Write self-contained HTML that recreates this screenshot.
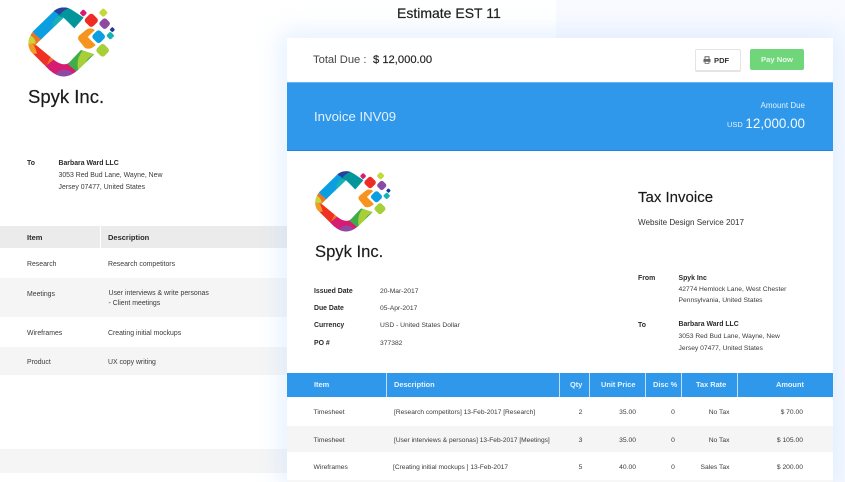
<!DOCTYPE html>
<html><head><meta charset="utf-8"><style>
html,body{margin:0;padding:0;width:845px;height:482px;overflow:hidden;background:#f8faff}
#p{position:relative;width:845px;height:482px;overflow:hidden;background:#f8faff;font-family:"Liberation Sans",sans-serif;color:#222;filter:blur(.25px)}
.a{position:absolute}
.t{position:absolute;white-space:nowrap;line-height:12px;height:12px;font-size:6.9px;color:#3a3a3a;margin-top:1.5px}
.s{font-size:6.72px}
.b{font-weight:bold;color:#2a2a2a}
.r{text-align:right;transform:translateX(-100%)}
.c{text-align:center;transform:translateX(-50%)}
.w{color:#fff}
.h{color:#e6f3fd;font-size:7.4px;font-weight:bold;margin-top:.5px}
.v{top:373px;width:1px;height:24px;background:#bfe0f8}
</style></head><body><div id="p">
<svg width="0" height="0" style="position:absolute"><defs>
<clipPath id="ring"><path d="M97 92L163 28Q190 10 217 28L250 50L222 82L190 50L106 131L165 180Q190 196 205 186L242 147L282 160L232 208Q190 245 148 208L92 152Q74 125 97 92Z"/></clipPath>
<symbol id="logo" viewBox="80 15 270 217">
<g clip-path="url(#ring)">
<path fill="#ee7326" d="M70 80L135 115L175 180L140 225L70 170Z"/>
<path fill="#ee3124" d="M92 135L108 134L150 168L138 196L85 160Z"/>
<path fill="#f59a23" d="M80 122Q102 122 110 158L80 160Z"/>
<path fill="#c5d83a" d="M80 98Q106 108 106 128L80 128Z"/>
<path fill="#0b9fe2" d="M88 86L165 12L205 45L125 118Z"/>
<path fill="#16b1b4" d="M155 75Q160 45 195 38L198 52L172 76Z"/>
<path fill="#00969b" d="M172 44Q178 20 210 10L265 50L222 90L190 50Z"/>
<path fill="#2a3f9e" d="M160 30L185 8L212 20Q190 24 178 42Z"/>
<path fill="#d81b72" d="M165 172L205 182L236 208L190 245L130 200Z"/>
<path fill="#8d4aa3" d="M158 228Q175 205 193 206Q212 207 224 228Z"/>
<path fill="#3fae49" d="M200 188L242 140L290 160L232 214Z"/>
<path fill="#a9cf38" d="M234 208Q226 175 246 150L290 158Q262 165 252 192Z"/>
</g>
<rect x="-8" y="-8" width="16" height="16" rx="4" fill="#d81b72" transform="translate(249 36) rotate(45)"/>
<rect x="-16.5" y="-16.5" width="33" height="33" rx="9" fill="#ee2b24" transform="translate(273 58) rotate(45)"/>
<rect x="-10" y="-10" width="20" height="20" rx="6" fill="#c5d83a" transform="translate(309 35) rotate(45)"/>
<rect x="-13.5" y="-13.5" width="27" height="27" rx="8" fill="#8d4aa3" transform="translate(313 68) rotate(45)"/>
<rect x="-6" y="-6" width="12" height="12" rx="3" fill="#1f3b9a" transform="translate(336 86) rotate(45)"/>
<rect x="-9" y="-9" width="18" height="18" rx="5" fill="#16b1b4" transform="translate(330 104) rotate(45)"/>
<path fill="#f7941d" d="M237 103L258 86Q268 78 284 87L262 108L286 132Q270 148 254 141L237 120Q229 111 237 103Z"/>
<rect x="-16" y="-16" width="32" height="32" rx="9" fill="#0b9fe2" transform="translate(295 107) rotate(45)"/>
<rect x="-16" y="-16" width="32" height="32" rx="9" fill="#a6cf38" transform="translate(307 148) rotate(45)"/>
</symbol>
</defs></svg>

<!-- left sheet -->
<div class="a" style="left:0;top:0;width:556px;height:482px;background:#fff"></div>
<svg class="a" style="left:26.5px;top:6px" width="90" height="72.3"><use href="#logo"/></svg>
<div class="t" style="left:28px;top:85px;height:24px;line-height:24px;font-size:18.5px;color:#1a1a1a;-webkit-text-stroke:.2px #1a1a1a;margin-top:0">Spyk Inc.</div>
<div class="t b" style="left:27px;top:156px">To</div>
<div class="t b" style="left:58.5px;top:156px">Barbara Ward LLC</div>
<div class="t" style="left:58.5px;top:168px">3053 Red Bud Lane, Wayne, New</div>
<div class="t" style="left:58.5px;top:180px">Jersey 07477, United States</div>

<div class="a" style="left:0;top:226px;width:556px;height:22px;background:#ebebeb"></div>
<div class="a" style="left:100px;top:226px;width:1px;height:22px;background:#fff"></div>
<div class="a" style="left:0;top:278px;width:556px;height:39px;background:#f5f5f5"></div>
<div class="a" style="left:0;top:347px;width:556px;height:28px;background:#f5f5f5"></div>
<div class="a" style="left:0;top:449px;width:556px;height:24px;background:#f5f5f5"></div>
<div class="t b" style="left:27px;top:231px;font-size:7.5px;margin-top:.5px">Item</div>
<div class="t b" style="left:108px;top:231px;font-size:7.5px;margin-top:.5px">Description</div>
<div class="t" style="left:27px;top:257px">Research</div>
<div class="t" style="left:108px;top:257px">Research competitors</div>
<div class="t" style="left:27px;top:287px">Meetings</div>
<div class="t" style="left:108.5px;top:286px">User interviews &amp; write personas</div>
<div class="t" style="left:108.5px;top:296px">- Client meetings</div>
<div class="t" style="left:27px;top:326px">Wireframes</div>
<div class="t" style="left:108px;top:326px">Creating initial mockups</div>
<div class="t" style="left:27px;top:355px">Product</div>
<div class="t" style="left:108px;top:355px">UX copy writing</div>
<div class="t" style="left:397px;top:6px;height:14px;line-height:14px;font-size:14px;color:#1a1a1a;-webkit-text-stroke:.2px #1a1a1a;margin-top:0">Estimate EST 11</div>

<!-- right card -->
<div class="a" style="left:287px;top:38px;width:546px;height:444px;background:#fff;box-shadow:0 0 24px 6px rgba(190,220,255,.42)"></div>
<div class="t" style="left:313px;top:53px;font-size:11.2px;color:#444;margin-top:.5px">Total Due :</div>
<div class="t" style="left:373px;top:53px;font-size:11.2px;color:#222;-webkit-text-stroke:.15px #222;margin-top:.5px">$ 12,000.00</div>
<div class="a" style="left:694.5px;top:49px;width:44.5px;height:20px;background:#fff;border:1px solid #e4e4e4;border-bottom-width:2px;border-radius:2px"></div>
<svg class="a" style="left:702.5px;top:56px" width="8" height="8" viewBox="0 0 8 8"><path fill="none" stroke="#666" d="M2 3V.8H6V3"/><path fill="#666" d="M0.5 3H7.5V6.2H6.2V5H1.8V6.2H.5Z"/><path fill="none" stroke="#666" stroke-width=".8" d="M2.1 5.4H5.9V7.5H2.1Z"/></svg>
<div class="t b" style="left:714px;top:54px;font-size:7.6px;color:#333;margin-top:.5px">PDF</div>
<div class="a" style="left:750px;top:49px;width:54px;height:21px;background:#6fd67a;border-radius:2px"></div>
<div class="t w c" style="left:777px;top:53px;font-size:7.7px;font-weight:bold;opacity:.85;margin-top:.5px">Pay Now</div>

<div class="a" style="left:287px;top:82px;width:546px;height:69px;background:#2f98ea;border-top:1px solid #6bb6f0;box-sizing:border-box;border-bottom:1px solid #1c86dc"></div>
<div class="t" style="left:314px;top:110px;font-size:13.2px;color:#e3f1fd;margin-top:.5px">Invoice INV09</div>
<div class="t r" style="left:805px;top:99px;font-size:8px;color:#e3f1fd;margin-top:1px">Amount Due</div>
<div class="t" style="left:727px;top:118.5px;font-size:7.5px;color:#e3f1fd;margin-top:.5px">USD</div>
<div class="t r" style="left:805px;top:117px;font-size:13.4px;color:#f2f9ff;margin-top:.5px">12,000.00</div>

<svg class="a" style="left:314px;top:169.5px" width="78.5" height="63.1"><use href="#logo"/></svg>
<div class="t" style="left:315px;top:240px;height:22px;line-height:22px;font-size:16.6px;color:#1a1a1a;-webkit-text-stroke:.15px #1a1a1a;margin-top:.5px">Spyk Inc.</div>

<div class="t b" style="left:314px;top:284px">Issued Date</div><div class="t s" style="left:380px;top:284px">20-Mar-2017</div>
<div class="t b" style="left:314px;top:301px">Due Date</div><div class="t s" style="left:380px;top:301px">05-Apr-2017</div>
<div class="t b" style="left:314px;top:318.5px">Currency</div><div class="t s" style="left:380px;top:318.5px">USD - United States Dollar</div>
<div class="t b" style="left:314px;top:336px">PO #</div><div class="t s" style="left:380px;top:336px">377382</div>

<div class="t" style="left:638px;top:191px;font-size:15px;color:#1a1a1a;-webkit-text-stroke:.15px #1a1a1a;margin-top:.5px">Tax Invoice</div>
<div class="t" style="left:638px;top:216px;font-size:8.1px;color:#333;margin-top:.5px">Website Design Service 2017</div>
<div class="t b" style="left:638px;top:271px">From</div>
<div class="t b" style="left:678.5px;top:271px">Spyk Inc</div>
<div class="t s" style="left:678.5px;top:282px">42774 Hemlock Lane, West Chester</div>
<div class="t s" style="left:678.5px;top:293px">Pennsylvania, United States</div>
<div class="t b" style="left:638px;top:318px">To</div>
<div class="t b" style="left:678.5px;top:317.5px">Barbara Ward LLC</div>
<div class="t s" style="left:678.5px;top:329px">3053 Red Bud Lane, Wayne, New</div>
<div class="t s" style="left:678.5px;top:341px">Jersey 07477, United States</div>

<!-- table -->
<div class="a" style="left:287px;top:373px;width:546px;height:24px;background:#2f98ea"></div>
<div class="a v" style="left:386px"></div>
<div class="a v" style="left:559px"></div>
<div class="a v" style="left:589px"></div>
<div class="a v" style="left:645px"></div>
<div class="a v" style="left:681px"></div>
<div class="a v" style="left:737px"></div>
<div class="a" style="left:287px;top:426px;width:546px;height:26px;background:#f5f5f5"></div>
<div class="a" style="left:287px;top:480px;width:546px;height:2px;background:#f7f7f7"></div>
<div class="t h" style="left:314px;top:378.5px">Item</div>
<div class="t h" style="left:394px;top:378px">Description</div>
<div class="t h" style="left:570px;top:378px">Qty</div>
<div class="t h" style="left:601px;top:378px">Unit Price</div>
<div class="t h" style="left:653px;top:378px">Disc %</div>
<div class="t h" style="left:696px;top:378px">Tax Rate</div>
<div class="t h" style="left:776px;top:378px">Amount</div>

<div class="t s" style="left:313.5px;top:405px">Timesheet</div>
<div class="t s" style="left:394px;top:405px;font-size:6.6px">[Research competitors] 13-Feb-2017 [Research]</div>
<div class="t s c" style="left:580.5px;top:405px">2</div>
<div class="t s r" style="left:636px;top:405px">35.00</div>
<div class="t s c" style="left:673px;top:405px">0</div>
<div class="t s r" style="left:729.5px;top:405px">No Tax</div>
<div class="t s r" style="left:803px;top:405px">$ 70.00</div>

<div class="t s" style="left:313.5px;top:433px">Timesheet</div>
<div class="t s" style="left:394px;top:433px;font-size:6.6px">[User interviews &amp; personas] 13-Feb-2017 [Meetings]</div>
<div class="t s c" style="left:580.5px;top:433px">3</div>
<div class="t s r" style="left:636px;top:433px">35.00</div>
<div class="t s c" style="left:673px;top:433px">0</div>
<div class="t s r" style="left:729.5px;top:433px">No Tax</div>
<div class="t s r" style="left:803px;top:433px">$ 105.00</div>

<div class="t s" style="left:313.5px;top:460px">Wireframes</div>
<div class="t s" style="left:393px;top:460px;font-size:6.6px">[Creating initial mockups ] 13-Feb-2017</div>
<div class="t s c" style="left:580.5px;top:460px">5</div>
<div class="t s r" style="left:636px;top:460px">40.00</div>
<div class="t s c" style="left:673px;top:460px">0</div>
<div class="t s r" style="left:729.5px;top:460px">Sales Tax</div>
<div class="t s r" style="left:803px;top:460px">$ 200.00</div>
</div></body></html>
